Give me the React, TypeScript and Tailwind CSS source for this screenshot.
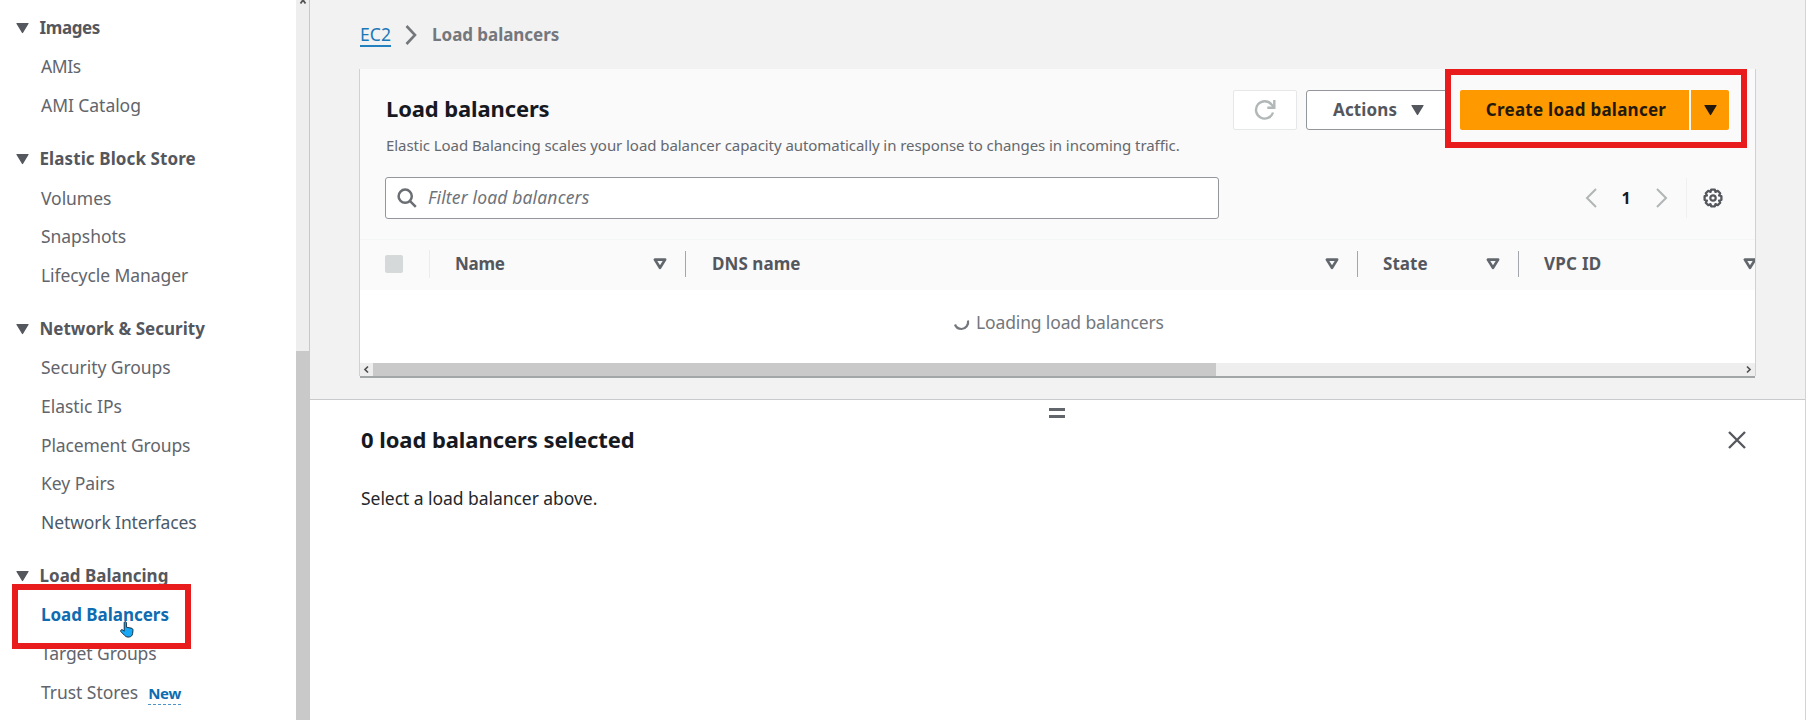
import React from "react";

type Item = { label: string; cls?: string; badge?: string };
type Group = { title: string; cls: string; items: Item[] };

const groups: Group[] = [
  {
    title: "Images",
    cls: "tracking-[-0.4px]",
    items: [
      { label: "AMIs", cls: "tracking-[-0.4px]" },
      { label: "AMI Catalog", cls: "tracking-[-0.05px]" },
    ],
  },
  {
    title: "Elastic Block Store",
    cls: "tracking-[0.1px]",
    items: [
      { label: "Volumes", cls: "tracking-[-0.05px]" },
      { label: "Snapshots", cls: "tracking-[-0.05px]" },
      { label: "Lifecycle Manager", cls: "tracking-[-0.07px]" },
    ],
  },
  {
    title: "Network & Security",
    cls: "tracking-[0px]",
    items: [
      { label: "Security Groups", cls: "tracking-[-0.05px]" },
      { label: "Elastic IPs", cls: "tracking-[-0.03px]" },
      { label: "Placement Groups", cls: "tracking-[-0.12px]" },
      { label: "Key Pairs", cls: "tracking-[-0.05px]" },
      { label: "Network Interfaces", cls: "tracking-[-0.11px] text-[#4b5a6b]" },
    ],
  },
  {
    title: "Load Balancing",
    cls: "tracking-[0px]",
    items: [
      { label: "Load Balancers", cls: "pt-px tracking-[-0.03px] text-[17px] font-bold text-[#0f6cb0]" },
      { label: "Target Groups", cls: "tracking-[-0.1px]" },
      { label: "Trust Stores", cls: "tracking-[-0.05px]", badge: "New" },
    ],
  },
];

function Caret({ className }: { className: string }) {
  return (
    <svg viewBox="0 0 14 12" className={className} fill="currentColor">
      <path d="M1 .5h12a.6.6 0 0 1 .5.9L7.6 11.2a.7.7 0 0 1-1.2 0L.5 1.4A.6.6 0 0 1 1 .5z" />
    </svg>
  );
}

function SortIcon({ className = "" }: { className?: string }) {
  return (
    <svg viewBox="0 0 14 12" className={`h-3 w-3.5 shrink-0 ${className}`} fill="none" stroke="#62676d" strokeWidth="2.7" strokeLinejoin="round">
      <path d="M1.9 1.6h10.2L7 9.8z" />
    </svg>
  );
}

function Hand() {
  return (
    <svg viewBox="0 0 14 17" className="absolute left-[120px] top-[621px] h-[17px] w-3.5">
      <path
        d="M4.200 1.500c0-1.100 2.200-1.100 2.200 0v4.700l4.600.9c1.500.3 2.100 1 2 2.300l-.4 3.300c-.3 1.900-1.500 3-3.300 3.300-1.800.3-3.400-.1-4.600-1.500L.8 10.600C.1 9.300 1.600 8 2.800 9l1.400 1.200z"
        fill="#18a8f5"
        stroke="#0b2536"
        strokeWidth="0.9"
        strokeLinejoin="round"
      />
    </svg>
  );
}

function Sidebar() {
  return (
    <aside className="flex w-[310px] shrink-0 bg-white">
      <nav className="flex w-[296px] flex-col overflow-hidden pt-[8.6px] text-[17.5px] text-[#62656b]">
        {groups.map((g) => (
          <section key={g.title} className="mb-[15.2px] flex shrink-0 flex-col">
            <div className="flex h-[38.67px] items-center pl-4 text-[17px] font-bold text-[#54575d]">
              <Caret className="h-3 w-[13px]" />
              <span className={`ml-[10.5px] whitespace-nowrap ${g.cls}`}>{g.title}</span>
            </div>
            {g.items.map((it) => (
              <a key={it.label} className="flex h-[38.67px] items-center pl-[41px]">
                <span className={`whitespace-nowrap ${it.cls ?? ""}`}>{it.label}</span>
                {it.badge && (
                  <span className="ml-[10px] mt-[3px] border-b border-dashed border-[#4d93c7] text-[15px] font-bold leading-[22px] tracking-[-0.3px] text-[#0f6cb0]">
                    {it.badge}
                  </span>
                )}
              </a>
            ))}
          </section>
        ))}
      </nav>
      <div className="flex w-[13px] flex-col items-center bg-[#eeeeee]">
        <svg viewBox="0 0 8 4" className="h-1 w-2 shrink-0" fill="none" stroke="#555" strokeWidth="1.8">
          <path d="M1.500 3.500L4 0l2.500 3.500" />
        </svg>
        <div className="mt-[347px] w-full flex-1 bg-[#c9c9c9]" />
      </div>
      <div className="w-px bg-[#c8c8c8]" />
    </aside>
  );
}

function TableHeader() {
  return (
    <div className="flex h-[51px] items-center overflow-hidden border-t border-[#f4f5f5] bg-[#fafafa] pb-[2px] text-[17px] font-bold text-[#54575d]">
      <div className="ml-[25px] h-[18px] w-[18px] shrink-0 rounded-[2px] bg-[#d5d9d9]" />
      <div className="ml-[26px] h-7 w-px shrink-0 bg-[#eaeded]" />
      <div className="ml-[25px] flex w-[212px] shrink-0 items-center justify-between">
        <span className="tracking-[-0.3px]">Name</span>
        <SortIcon />
      </div>
      <div className="ml-[18px] h-[26px] w-px shrink-0 bg-[#a3a7ab]" />
      <div className="ml-[26px] flex w-[627px] shrink-0 items-center justify-between">
        <span className="tracking-[0.06px]">DNS name</span>
        <SortIcon />
      </div>
      <div className="ml-[18px] h-[26px] w-px shrink-0 bg-[#a3a7ab]" />
      <div className="ml-[25px] flex w-[117px] shrink-0 items-center justify-between">
        <span className="tracking-[0.05px]">State</span>
        <SortIcon />
      </div>
      <div className="ml-[18px] h-[26px] w-px shrink-0 bg-[#a3a7ab]" />
      <div className="ml-[25px] flex w-[213px] shrink-0 items-center justify-between">
        <span className="tracking-[0.25px]">VPC ID</span>
        <SortIcon />
      </div>
    </div>
  );
}

function Card() {
  return (
    <div className="ml-[50px] flex h-[307px] w-[1395px] flex-col bg-[#fafafa] shadow-[-1px_0_0_0_#d0d2d2,1px_0_0_0_#d0d2d2,0_2px_0_0_#a3a6a6]">
      <div className="flex h-[170px] shrink-0 flex-col pl-[25px] pr-[26px] pt-[21px]">
        <div className="flex h-10 justify-between">
          <h1 className="whitespace-nowrap pl-px text-[22px] font-bold leading-[36px] tracking-[-0.13px] text-[#16191f]">Load balancers</h1>
          <div className="flex">
            <button className="flex h-10 w-16 items-center justify-center rounded-[2px] border border-[#e6e8e8] bg-white">
              <svg viewBox="0 0 22 22" className="h-[22px] w-[22px]" fill="none" stroke="#b2b8b8" strokeWidth="2.4">
                <path d="M19 13.500A8.700 8.700 0 1 1 17.500 5.500L19.800 8.300" />
                <path d="M20.300 1v7.700h-7" />
              </svg>
            </button>
            <button className="ml-[9px] flex h-10 w-[145px] items-center rounded-[3px] border border-[#93979b] bg-white pl-[26px] text-[17px] font-bold text-[#54575d]">
              <span className="tracking-[0.15px]">Actions</span>
              <Caret className="ml-[14px] h-3 w-[13px]" />
            </button>
            <button className="ml-[9px] flex h-10 w-[229px] items-center justify-center rounded-l-[2px] bg-[#ff9900] pl-[3px] text-[17px] font-bold text-[#22190c]">
              <span className="whitespace-nowrap tracking-[0.26px]">Create load balancer</span>
            </button>
            <button className="ml-[2px] flex h-10 w-[38px] items-center justify-center rounded-r-[2px] bg-[#ff9900] text-[#22190c]">
              <Caret className="h-3 w-[13px]" />
            </button>
          </div>
        </div>
        <p className="mt-[4px] whitespace-nowrap pl-px text-[15px] leading-[22px] tracking-[-0.06px] text-[#65686e]">
          Elastic Load Balancing scales your load balancer capacity automatically in response to changes in incoming traffic.
        </p>
        <div className="mt-[21px] flex h-[42px] items-center">
          <div className="flex h-[42px] w-[834px] items-center rounded-[3px] border border-[#93979b] bg-white pb-px pl-[11px]">
            <svg viewBox="0 0 20 20" className="h-5 w-5" fill="none" stroke="#6a6e73" strokeWidth="2.500">
              <circle cx="8.200" cy="8.200" r="6.600" />
              <path d="M12.800 12.800l6 6" />
            </svg>
            <span className="ml-[11px] whitespace-nowrap text-[17.5px] italic tracking-[0.15px] text-[#6f7378]">Filter load balancers</span>
          </div>
          <svg viewBox="0 0 12 20" className="ml-[366px] h-5 w-3" fill="none" stroke="#b0b5b5" strokeWidth="2">
            <path d="M11 1L2 10l9 9" />
          </svg>
          <span className="ml-[24px] w-[10px] text-center text-[16px] font-bold text-[#16191f]">1</span>
          <svg viewBox="0 0 12 20" className="ml-[25px] h-5 w-3" fill="none" stroke="#b0b5b5" strokeWidth="2">
            <path d="M1 1l9 9-9 9" />
          </svg>
          <div className="ml-[18px] h-10 w-px bg-[#eff1f1]" />
          <svg viewBox="0 0 22 22" className="ml-[15px] h-[22px] w-[22px]" fill="none" stroke="#54575d" strokeLinejoin="round">
            <path
              d="M9.200 1.600h3.600l.7 2.300 2.200-1.100 2.500 2.500-1.100 2.200 2.300.7v3.600l-2.300.7 1.100 2.200-2.500 2.500-2.200-1.100-.7 2.300H9.200l-.7-2.300-2.200 1.100-2.500-2.500 1.100-2.200-2.300-.7V8.200l2.300-.7-1.100-2.200 2.500-2.500 2.200 1.100z"
              strokeWidth="2.300"
              transform="translate(0 1)"
            />
            <circle cx="11" cy="11" r="2.700" strokeWidth="2.200" />
          </svg>
        </div>
      </div>
      <TableHeader />
      <div className="flex h-[73px] items-center bg-white pb-[8px] pl-[593px] text-[17.5px] text-[#74777c]">
        <svg viewBox="0 0 18 18" className="mt-px h-[18px] w-[18px]" fill="none" stroke="#74777c" strokeWidth="2.200">
          <path d="M2 10.500A7 7 0 0 0 8.500 15A7 7 0 0 0 15 6.500" />
        </svg>
        <span className="ml-[5px] whitespace-nowrap tracking-[-0.14px]">Loading load balancers</span>
      </div>
      <div className="flex h-[13px] items-center bg-[#eeeeee]">
        <svg viewBox="0 0 13 13" className="h-[13px] w-[13px]" fill="none" stroke="#505050" strokeWidth="1.700">
          <path d="M8 3.500L5 6.500l3 3" />
        </svg>
        <div className="h-[13px] w-[843px] bg-[#c9c9c9]" />
        <svg viewBox="0 0 13 13" className="ml-auto h-[13px] w-[13px]" fill="none" stroke="#505050" strokeWidth="1.700">
          <path d="M5 3.500l3 3-3 3" />
        </svg>
      </div>
    </div>
  );
}

export default function App() {
  return (
    <div className="relative flex h-[720px] w-[1818px] overflow-hidden bg-white font-['Noto_Sans',sans-serif]">
      <Sidebar />
      <main className="flex w-[1495px] shrink-0 flex-col">
        <div className="flex h-[399px] shrink-0 flex-col bg-[#f2f2f2]">
          <div className="flex h-[69px] shrink-0 items-center pl-[50px] text-[17px]">
            <a className="border-b-2 border-[#2580bf] text-[17.5px] leading-[22px] tracking-[0.1px] text-[#1a77b8]">EC2</a>
            <svg viewBox="0 0 12 20" className="ml-[14px] h-5 w-3" fill="none" stroke="#74777c" strokeWidth="2.600">
              <path d="M1.500 1l8.500 9-8.500 9" />
            </svg>
            <span className="ml-[15px] whitespace-nowrap font-bold tracking-[-0.05px] text-[#74777c]">Load balancers</span>
          </div>
          <Card />
        </div>
        <section className="flex flex-1 flex-col border-t border-[#c8cacb] bg-white pl-[50px]">
          <div className="ml-[689px] mt-[8px] flex h-[10px] w-4 flex-col justify-between">
            <div className="h-[3px] bg-[#62656b]" />
            <div className="h-[3px] bg-[#62656b]" />
          </div>
          <div className="mt-[7px] flex h-[30px] items-center justify-between pl-px pr-[59px]">
            <h2 className="whitespace-nowrap pb-[2px] text-[22px] font-bold tracking-[-0.07px] text-[#16191f]">0 load balancers selected</h2>
            <svg viewBox="0 0 18 18" className="h-[18px] w-[18px]" fill="none" stroke="#54575d" strokeWidth="2.300">
              <path d="M1 1l16 16M17 1L1 17" />
            </svg>
          </div>
          <p className="mt-[31px] pl-px text-[17.5px] leading-[24px] tracking-[-0.05px] text-[#24272c]">Select a load balancer above.</p>
        </section>
      </main>
      <div className="w-px bg-[#d2d4d4]" />
      <div className="absolute left-3 top-[584px] h-[65px] w-[179px] border-[6px] border-[#e81c1c]" />
      <div className="absolute left-[1445px] top-[69px] h-[79px] w-[302px] border-[6px] border-[#e81c1c]" />
      <Hand />
    </div>
  );
}
